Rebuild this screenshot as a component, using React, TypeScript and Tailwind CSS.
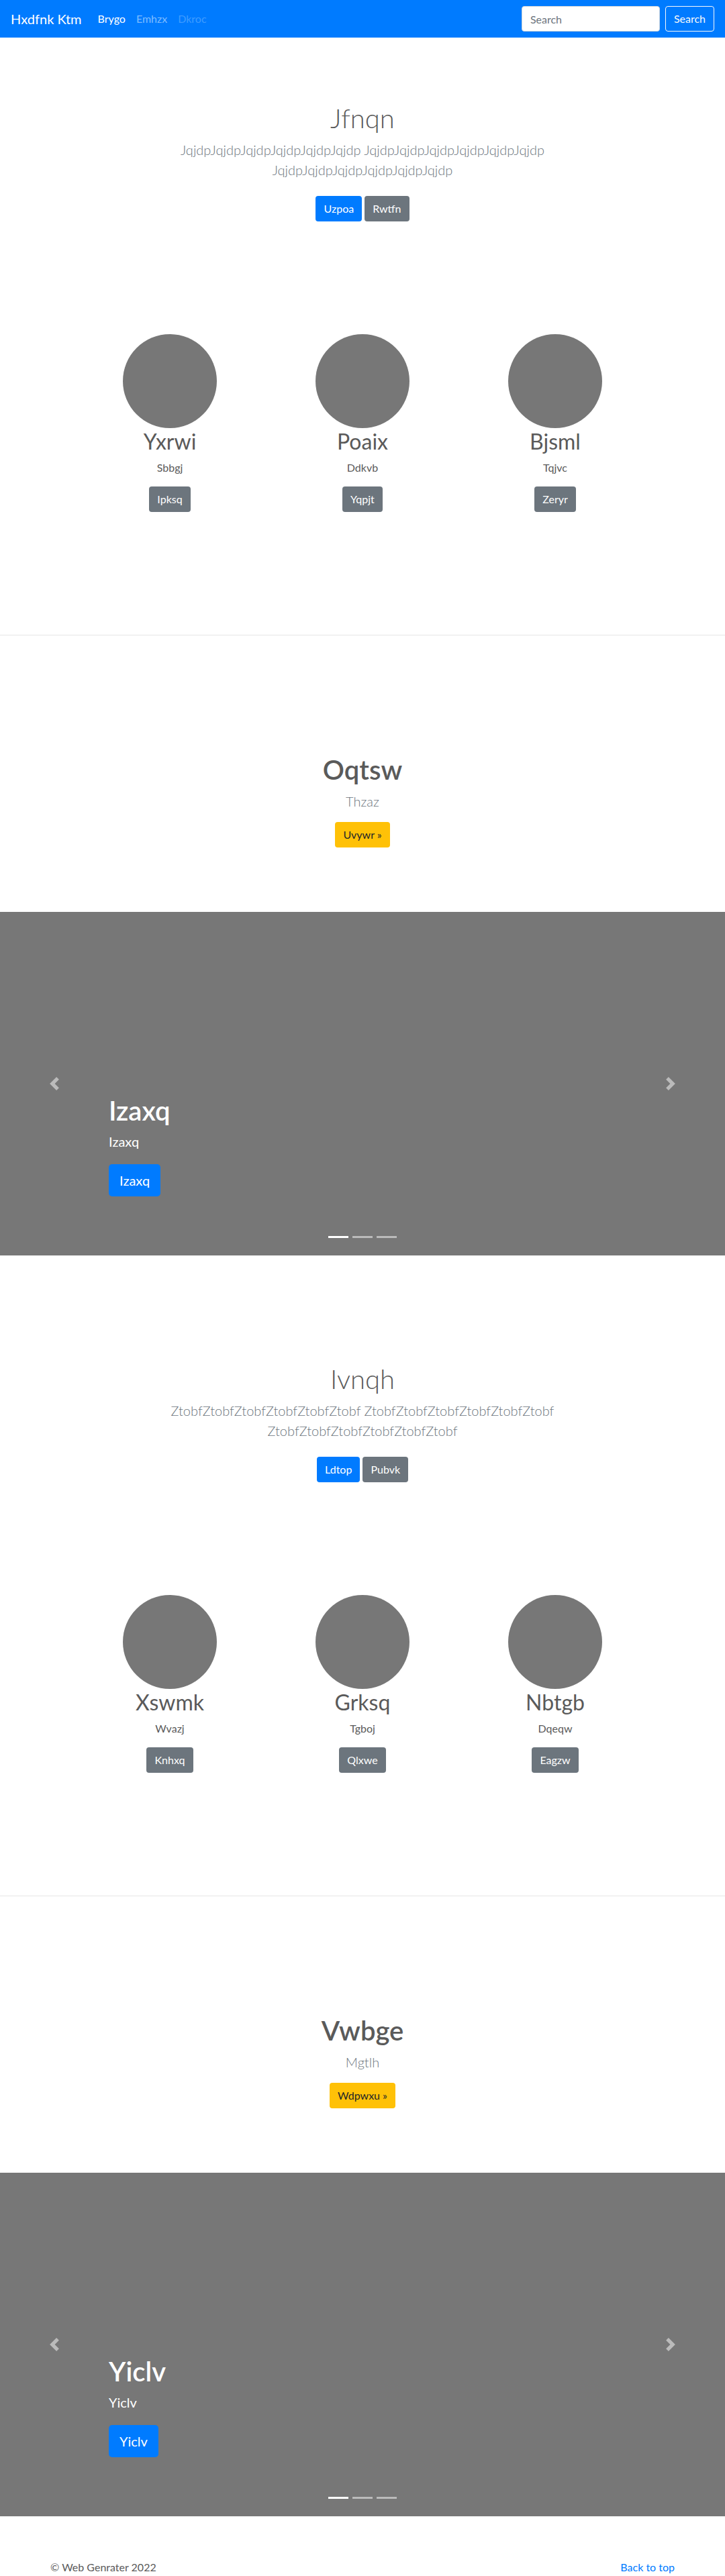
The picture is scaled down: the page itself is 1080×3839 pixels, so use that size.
import React from "react"

type Hero = { title: string; lead: string; primary: string; secondary: string }
type Person = { name: string; sub: string; btn: string }
type Feature = { title: string; sub: string; btn: string }

const blocks: { hero: Hero; people: Person[]; feature: Feature; slide: string }[] = [
  {
    hero: {
      title: "Jfnqn",
      lead: "JqjdpJqjdpJqjdpJqjdpJqjdpJqjdp JqjdpJqjdpJqjdpJqjdpJqjdpJqjdp JqjdpJqjdpJqjdpJqjdpJqjdpJqjdp",
      primary: "Uzpoa",
      secondary: "Rwtfn",
    },
    people: [
      { name: "Yxrwi", sub: "Sbbgj", btn: "Ipksq" },
      { name: "Poaix", sub: "Ddkvb", btn: "Yqpjt" },
      { name: "Bjsml", sub: "Tqjvc", btn: "Zeryr" },
    ],
    feature: { title: "Oqtsw", sub: "Thzaz", btn: "Uvywr »" },
    slide: "Izaxq",
  },
  {
    hero: {
      title: "Ivnqh",
      lead: "ZtobfZtobfZtobfZtobfZtobfZtobf ZtobfZtobfZtobfZtobfZtobfZtobf ZtobfZtobfZtobfZtobfZtobfZtobf",
      primary: "Ldtop",
      secondary: "Pubvk",
    },
    people: [
      { name: "Xswmk", sub: "Wvazj", btn: "Knhxq" },
      { name: "Grksq", sub: "Tgboj", btn: "Qlxwe" },
      { name: "Nbtgb", sub: "Dqeqw", btn: "Eagzw" },
    ],
    feature: { title: "Vwbge", sub: "Mgtlh", btn: "Wdpwxu »" },
    slide: "Yiclv",
  },
]

function Navbar() {
  return (
    <nav className="h-14 bg-[#007bff] flex items-center justify-between px-4">
      <div className="flex items-center">
        <span className="text-[20px] leading-[30px] text-white mr-4">Hxdfnk Ktm</span>
        <a className="px-2 text-base leading-6 text-white">Brygo</a>
        <a className="px-2 text-base leading-6 text-[#7fbdff]">Emhzx</a>
        <a className="px-2 text-base leading-6 text-[#3f9cff]">Dkroc</a>
      </div>
      <div className="flex items-center">
        <input
          placeholder="Search"
          className="w-[206px] h-[38px] rounded bg-white border border-[#ced4da] px-3 text-base text-[#495057] placeholder:text-[#6c757d] mr-2 outline-none"
        />
        <button className="h-[38px] px-3 rounded border border-[#f8f9fa] text-[#f8f9fa] text-base">
          Search
        </button>
      </div>
    </nav>
  )
}

function HeroSection({ hero }: { hero: Hero }) {
  return (
    <section className="py-24 text-center">
      <div className="w-[610px] mx-auto">
        <h1 className="text-[40px] leading-[48px] font-light text-[#5a5a5a] mb-2">{hero.title}</h1>
        <p className="text-[20px] leading-[30px] font-light text-[#6c757d] mb-4">{hero.lead}</p>
        <div className="flex justify-center gap-1 py-2 mb-4">
          <a className="h-[38px] px-3 flex items-center rounded bg-[#007bff] text-white text-base">
            {hero.primary}
          </a>
          <a className="h-[38px] px-3 flex items-center rounded bg-[#6c757d] text-white text-base">
            {hero.secondary}
          </a>
        </div>
      </div>
    </section>
  )
}

function Marketing({ people }: { people: Person[] }) {
  return (
    <section className="pt-12 pb-[183px]">
      <div className="w-[861px] mx-auto grid grid-cols-3 text-center">
        {people.map((p) => (
          <div key={p.name} className="flex flex-col items-center">
            <div className="w-[140px] h-[140px] rounded-full bg-[#777]" />
            <h2 className="mt-px text-[32px] leading-[38px] font-normal text-[#5a5a5a] mb-2">{p.name}</h2>
            <p className="text-base leading-6 text-[#5a5a5a] mb-4">{p.sub}</p>
            <a className="h-[38px] px-3 flex items-center rounded bg-[#6c757d] text-white text-base">
              {p.btn}
            </a>
          </div>
        ))}
      </div>
    </section>
  )
}

function FeatureSection({ feature }: { feature: Feature }) {
  return (
    <section className="pt-[176px] pb-24 text-center">
      <h1 className="text-[40px] leading-[48px] font-semibold text-[#5a5a5a] mb-2">{feature.title}</h1>
      <p className="text-[20px] leading-[30px] font-light text-[#6c757d] mb-4">{feature.sub}</p>
      <div className="flex justify-center">
        <a className="h-[38px] px-3 flex items-center rounded bg-[#ffc107] text-[#212529] text-base">
          {feature.btn}
        </a>
      </div>
    </section>
  )
}

function Carousel({ label }: { label: string }) {
  return (
    <section className="relative h-[512px] bg-[#777] mb-16 overflow-hidden">
      <div className="absolute left-0 top-0 bottom-0 w-[15%] flex items-center justify-center opacity-50">
        <svg width="20" height="20" viewBox="0 0 8 8" fill="#fff">
          <path d="M5.25 0l-4 4 4 4 1.5-1.5L4.25 4l2.5-2.5L5.25 0z" />
        </svg>
      </div>
      <div className="absolute right-0 top-0 bottom-0 w-[15%] flex items-center justify-center opacity-50">
        <svg width="20" height="20" viewBox="0 0 8 8" fill="#fff">
          <path d="M2.75 0l-1.5 1.5L3.75 4l-2.5 2.5L2.75 8l4-4-4-4z" />
        </svg>
      </div>
      <div className="absolute left-[15%] right-[15%] bottom-12 pb-5 text-left text-white">
        <h1 className="text-[40px] leading-[48px] font-semibold mb-2">{label}</h1>
        <p className="text-[20px] leading-[28px] mb-5">{label}</p>
        <div className="flex mb-5">
          <a className="h-[48px] px-4 flex items-center rounded-[5px] bg-[#007bff] text-white text-[20px]">
            {label}
          </a>
        </div>
      </div>
      <div className="absolute left-0 right-0 bottom-0 mb-4 flex justify-center">
        {[0, 1, 2].map((i) => (
          <span
            key={i}
            className={
              i === 0
                ? "w-[30px] h-[3px] mx-[3px] my-[10px] bg-white"
                : "w-[30px] h-[3px] mx-[3px] my-[10px] bg-white/50"
            }
          />
        ))}
      </div>
    </section>
  )
}

export default function App() {
  return (
    <div className="bg-white font-['Lato','Noto_Sans',sans-serif] text-[#5a5a5a]">
      <Navbar />
      {blocks.map((b, i) => (
        <div key={i}>
          <HeroSection hero={b.hero} />
          <Marketing people={b.people} />
          <hr className="border-0 border-t border-[#e5e5e5]" />
          <FeatureSection feature={b.feature} />
          <Carousel label={b.slide} />
        </div>
      ))}
      <footer className="w-[960px] mx-auto px-[15px] flex justify-between text-base leading-6 pb-12">
        <p className="text-[#5a5a5a]">© Web Genrater 2022</p>
        <a className="text-[#007bff]">Back to top</a>
      </footer>
    </div>
  )
}
